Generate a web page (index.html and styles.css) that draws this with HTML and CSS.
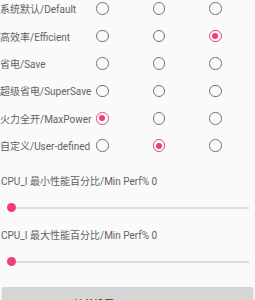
FILE: index.html
```html
<!DOCTYPE html>
<html>
<head>
    <title>CPU 模式</title>
    <link rel="stylesheet" href="styles.css">
</head>
<body>
    <div class="modes">
        <div class="mode-row">
            <span class="mode-name">系统默认/Default</span>
            <span class="radio"></span>
            <span class="radio"></span>
            <span class="radio"></span>
        </div>
        <div class="mode-row">
            <span class="mode-name">高效率/Efficient</span>
            <span class="radio"></span>
            <span class="radio"></span>
            <span class="radio checked"></span>
        </div>
        <div class="mode-row">
            <span class="mode-name">省电/Save</span>
            <span class="radio"></span>
            <span class="radio"></span>
            <span class="radio"></span>
        </div>
        <div class="mode-row">
            <span class="mode-name">超级省电/SuperSave</span>
            <span class="radio"></span>
            <span class="radio"></span>
            <span class="radio"></span>
        </div>
        <div class="mode-row">
            <span class="mode-name">火力全开/MaxPower</span>
            <span class="radio checked"></span>
            <span class="radio"></span>
            <span class="radio"></span>
        </div>
        <div class="mode-row">
            <span class="mode-name">自定义/User-defined</span>
            <span class="radio"></span>
            <span class="radio checked"></span>
            <span class="radio"></span>
        </div>
    </div>

    <div class="perf">
        <div class="perf-label">CPU_I 最小性能百分比/Min Perf% 0</div>
        <div class="slider">
            <div class="track"></div>
            <div class="thumb"></div>
        </div>
    </div>

    <div class="perf">
        <div class="perf-label">CPU_I 最大性能百分比/Min Perf% 0</div>
        <div class="slider">
            <div class="track"></div>
            <div class="thumb"></div>
        </div>
    </div>

    <button class="start-btn">开始并设置/START AND SET</button>
</body>
</html>
```

FILE: styles.css
```css
body {
    margin: 0;
    background: #fafafa;
    font-family: Roboto, "Noto Sans CJK SC", sans-serif;
    font-size: 10px;
    color: #626262;
    overflow: hidden;
}

.modes {
    margin-top: -5px;
    margin-bottom: 15.6px;
}

.mode-row {
    display: grid;
    grid-template-columns: 74px repeat(3, 56.5px);
    align-items: center;
    height: 27.4px;
}

.mode-name {
    white-space: nowrap;
}

.radio {
    justify-self: center;
    width: 10.5px;
    height: 10.5px;
    border: 1.6px solid #747474;
    border-radius: 50%;
    display: flex;
    align-items: center;
    justify-content: center;
}

.radio.checked {
    border-color: #ea4b7f;
}

.radio.checked::after {
    content: "";
    width: 6px;
    height: 6px;
    border-radius: 50%;
    background: #ea3f78;
}

.perf + .perf {
    padding-top: 12px;
}

.perf-label {
    padding-left: 1px;
    height: 14px;
    line-height: 14px;
}

.slider {
    position: relative;
    height: 28px;
    margin: 0 6px 0 11px;
}

.track {
    position: absolute;
    left: 0;
    right: 0;
    top: 18px;
    height: 2px;
    background: #dcdcdc;
}

.thumb {
    position: absolute;
    left: -4.5px;
    top: 14.5px;
    width: 9px;
    height: 9px;
    border-radius: 50%;
    background: #ee3d78;
}

.start-btn {
    display: block;
    margin: 16px 2px 0;
    width: 251px;
    height: 30px;
    border: none;
    border-radius: 2px;
    background: #d6d6d6;
    box-shadow: 0 1px 2px rgba(0,0,0,0.2);
    font-family: Roboto, "Noto Sans CJK SC", sans-serif;
    font-size: 10px;
    font-weight: 500;
    color: #333;
    padding-top: 4px;
}
```
